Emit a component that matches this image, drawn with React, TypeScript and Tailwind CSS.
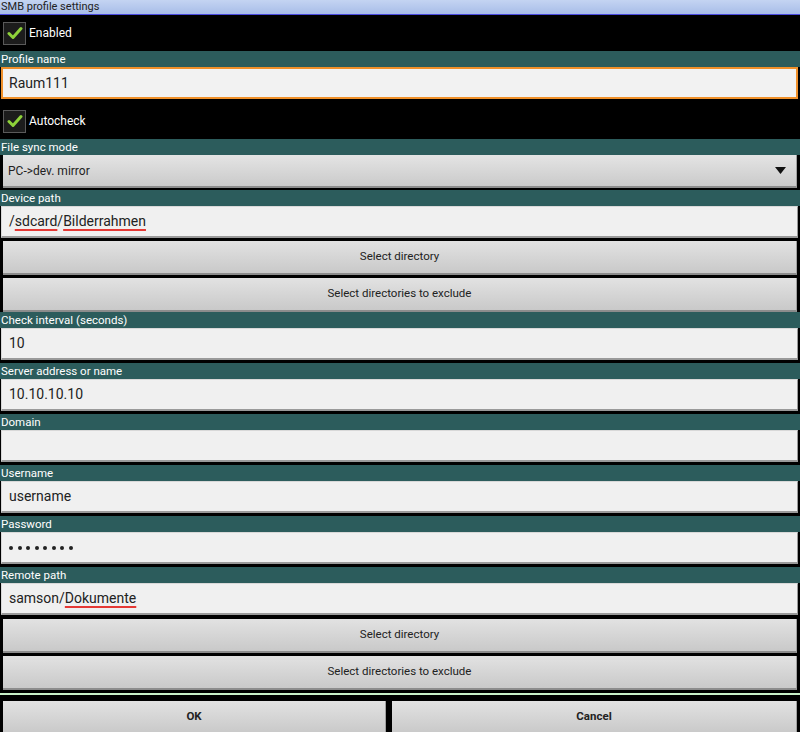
import React from 'react';

const font = { fontFamily: 'Roboto, "Liberation Sans", sans-serif' };

function Label({ text }: { text: string }) {
  return (
    <div className="h-[16px] shrink-0 bg-[#2c5c5c] text-white text-[11.5px] leading-[16px] pl-[1px]">{text}</div>
  );
}

function Field({ children, focused }: { children?: React.ReactNode; focused?: boolean }) {
  return (
    <div className="pb-[3px] pl-[1px] pr-[2px]">
      <div
        className={
          focused
            ? 'h-[32px] bg-[#f2f2f2] border-2 border-[#f0902a] flex items-center pl-[6px] text-[14px] text-[#222]'
            : 'h-[32px] bg-[#f0f0f0] border border-[#d8d8d8] border-r-[#9a9a9a] border-b-[#9a9a9a] border-b-2 flex items-center pl-[7px] text-[14px] text-[#222]'
        }
      >
        {children}
      </div>
    </div>
  );
}

function Button({ text, bold }: { text: string; bold?: boolean }) {
  return (
    <div className="h-[34px] bg-gradient-to-b from-[#e2e2e2] to-[#c9c9c9] border-b-2 border-[#8c8c8c] border-r border-r-[#a0a0a0] flex items-center justify-center text-[11.5px] text-[#222]">
      <span className={bold ? 'font-bold' : ''}>{text}</span>
    </div>
  );
}

function Check({ text }: { text: string }) {
  return (
    <div className="h-full flex items-center pl-[3px] gap-[3px]">
      <div className="w-[23px] h-[23px] bg-[#1c1c1c] border border-[#5a5a5a] flex items-center justify-center">
        <svg width="16" height="14" viewBox="0 0 16 14">
          <path d="M2 7.5 L6 11.5 L14 2.5" stroke="#8ed23a" strokeWidth="3" fill="none" strokeLinecap="round" strokeLinejoin="round" />
        </svg>
      </div>
      <span className="text-white text-[12px]">{text}</span>
    </div>
  );
}

function Spell({ children }: { children: React.ReactNode }) {
  return <span className="underline decoration-[#e53935] decoration-2 underline-offset-[3px]">{children}</span>;
}

export default function App() {
  return (
    <div className="w-[800px] h-[732px] bg-black overflow-hidden flex flex-col" style={font}>
      <div className="h-[15px] shrink-0 bg-gradient-to-b from-[#c4d4f2] to-[#a8bde8] border-b border-[#4b4be0] text-[11px] leading-[14px] text-[#222] pl-[1px]">
        SMB profile settings
      </div>
      <div className="h-[36px] shrink-0">
        <Check text="Enabled" />
      </div>
      <Label text="Profile name" />
      <Field focused>Raum111</Field>
      <div className="h-[37px] shrink-0 pt-[1px]">
        <Check text="Autocheck" />
      </div>
      <Label text="File sync mode" />
      <div className="px-[3px] pb-[2px]">
        <div className="h-[33px] bg-gradient-to-b from-[#e4e4e4] to-[#cacaca] border-b-2 border-[#8c8c8c] border-r border-r-[#a0a0a0] flex items-center justify-between pl-[5px] pr-[10px] text-[12px] text-[#222]">
          <span>PC-&gt;dev. mirror</span>
          <svg width="11" height="7" viewBox="0 0 11 7">
            <path d="M0 0 H11 L5.5 7 Z" fill="#111" />
          </svg>
        </div>
      </div>
      <Label text="Device path" />
      <Field>
        <span>/<Spell>sdcard</Spell>/<Spell>Bilderrahmen</Spell></span>
      </Field>
      <div className="px-[3px] flex flex-col gap-[3px]">
        <Button text="Select directory" />
        <Button text="Select directories to exclude" />
      </div>
      <Label text="Check interval (seconds)" />
      <Field>10</Field>
      <Label text="Server address or name" />
      <Field>10.10.10.10</Field>
      <Label text="Domain" />
      <Field />
      <Label text="Username" />
      <Field>username</Field>
      <Label text="Password" />
      <Field>
        <div className="flex gap-[4.5px]">
          {[0, 1, 2, 3, 4, 5, 6, 7].map((i) => (
            <div key={i} className="w-[4px] h-[4px] rounded-full bg-[#222]" />
          ))}
        </div>
      </Field>
      <Label text="Remote path" />
      <Field>
        <span>samson/<Spell>Dokumente</Spell></span>
      </Field>
      <div className="px-[3px] flex flex-col gap-[3px] pt-[1px]">
        <Button text="Select directory" />
        <Button text="Select directories to exclude" />
      </div>
      <div className="h-[3px] shrink-0" />
      <div className="h-[2px] shrink-0 bg-[#c8f0c8]" />
      <div className="h-[6px] shrink-0" />
      <div className="flex gap-[6px] px-[3px]">
        <div className="w-[383px]">
          <Button text="OK" bold />
        </div>
        <div className="flex-1">
          <Button text="Cancel" bold />
        </div>
      </div>
    </div>
  );
}
